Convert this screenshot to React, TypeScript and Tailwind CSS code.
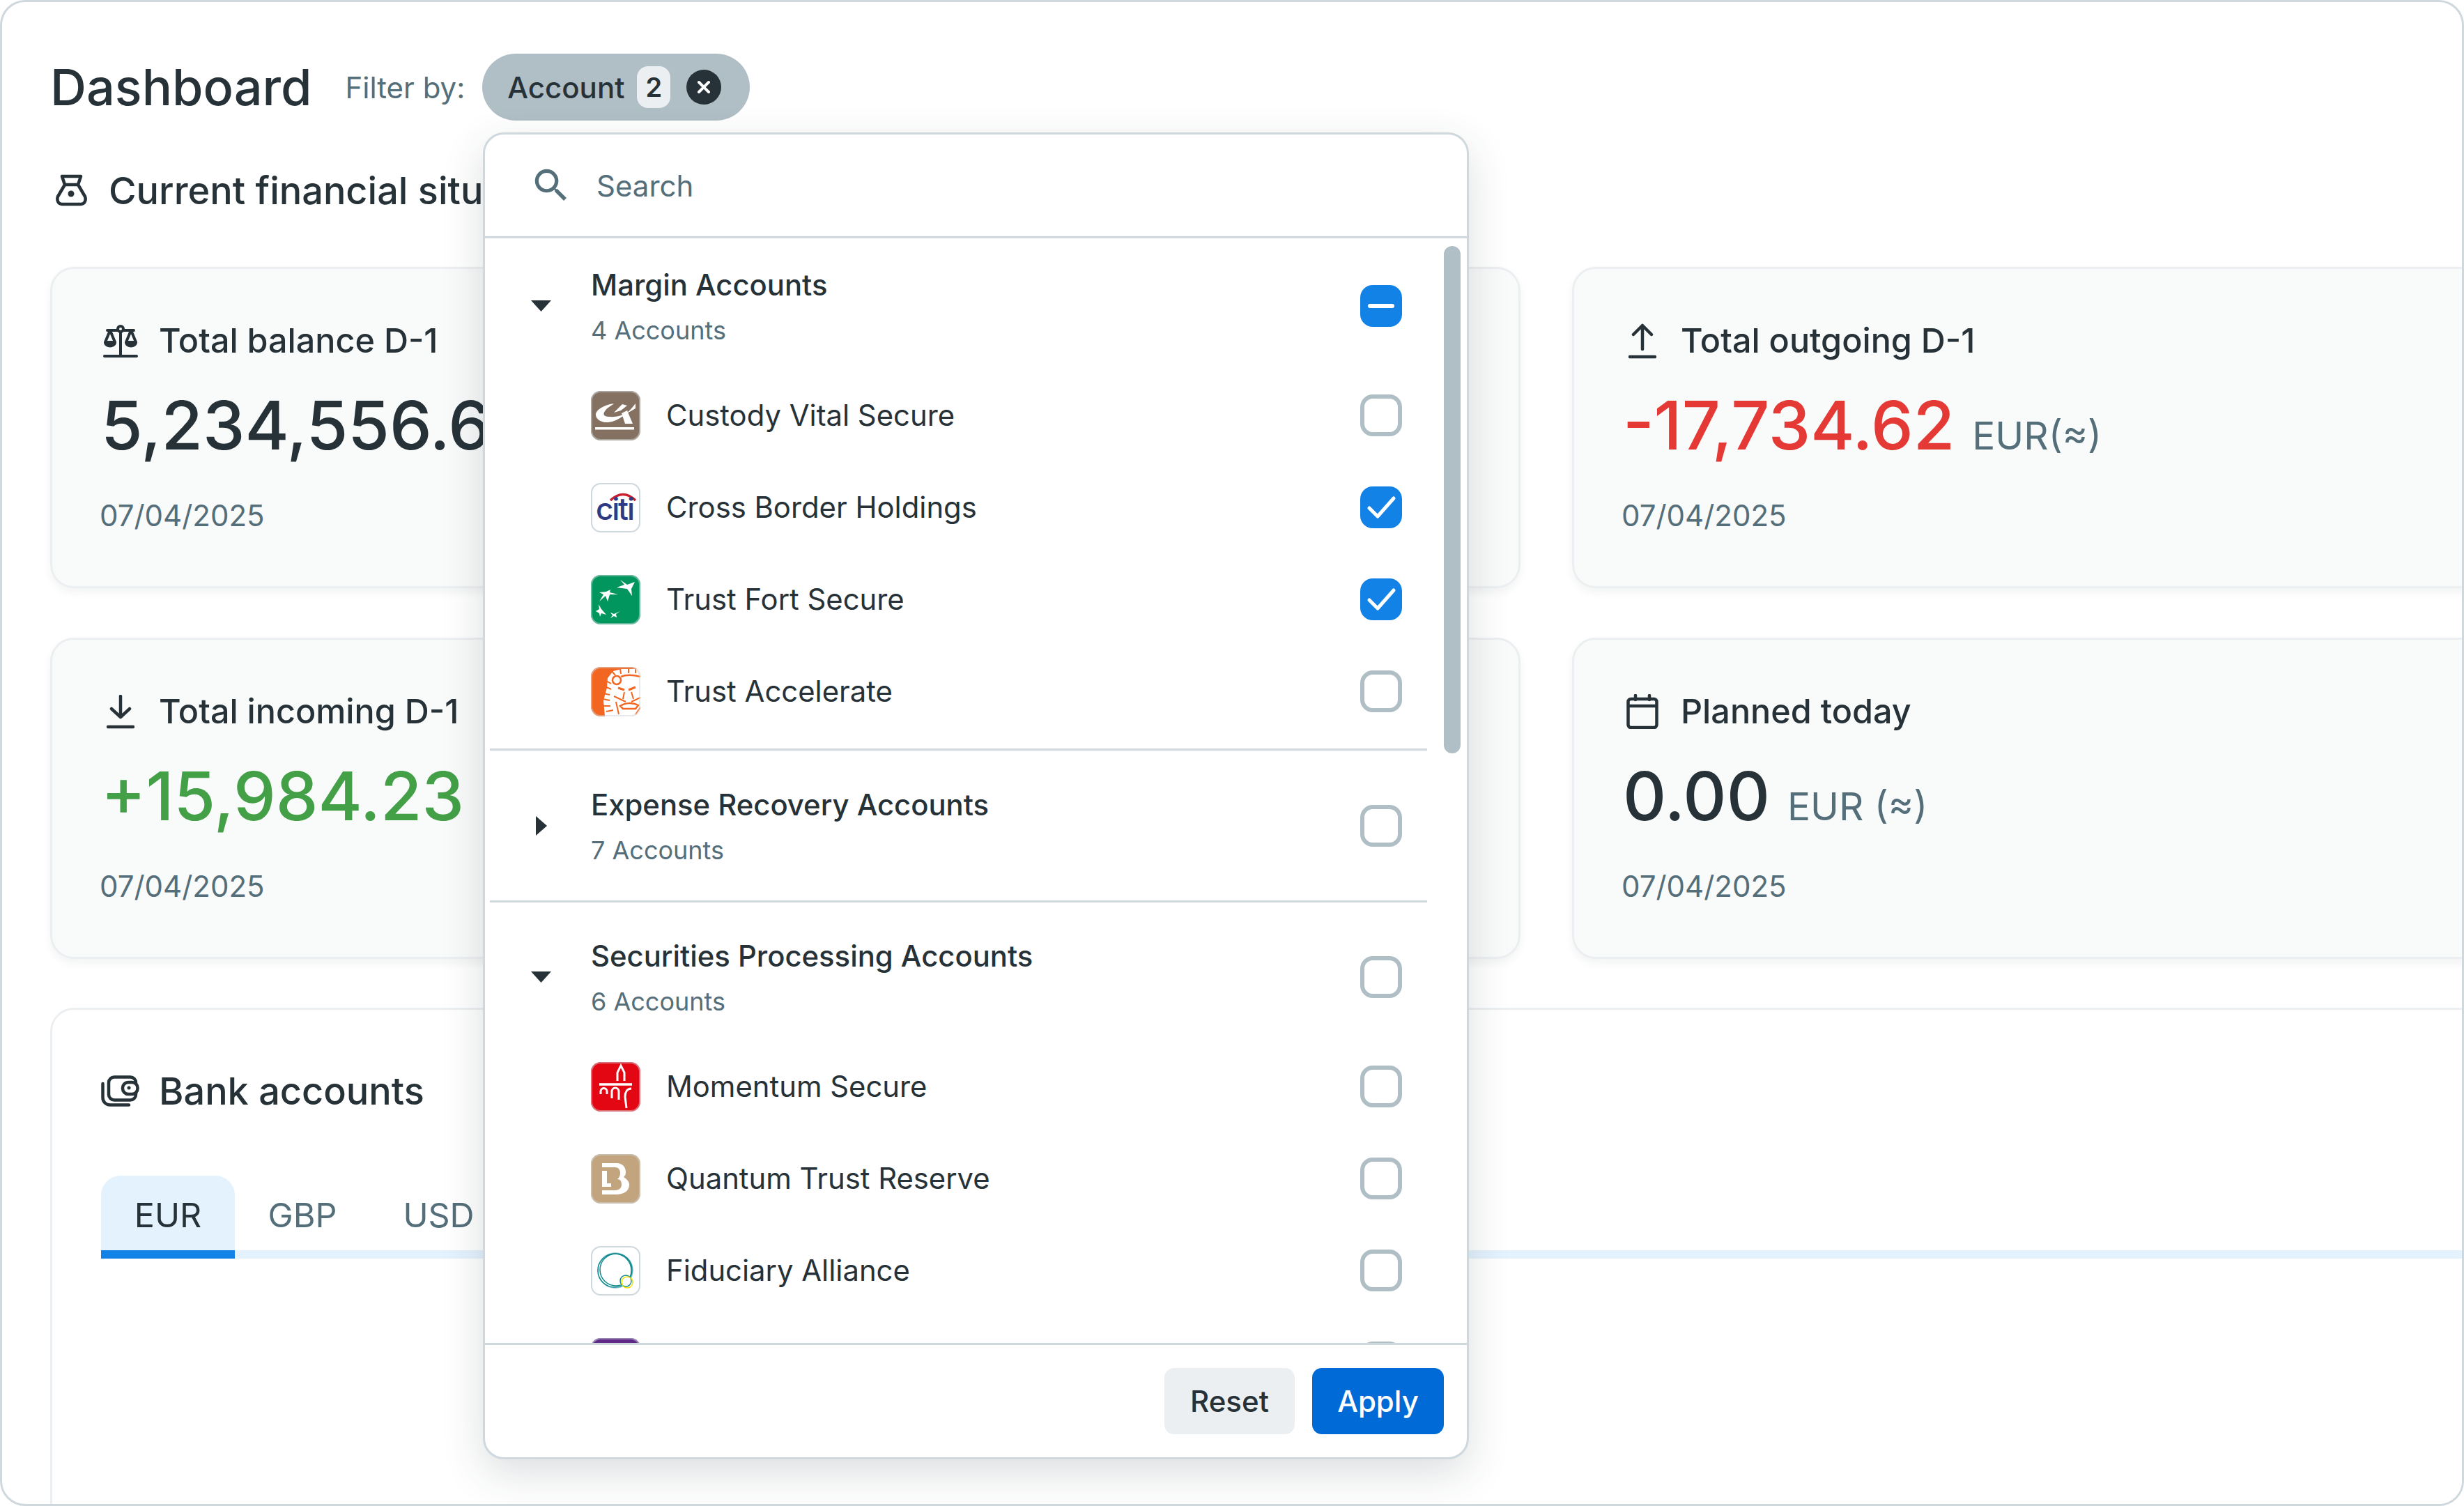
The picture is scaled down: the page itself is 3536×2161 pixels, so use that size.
import type { ReactNode } from "react";

const accounts = {
  margin: [
    { name: "Custody Vital Secure", logo: "ca", state: "off" },
    { name: "Cross Border Holdings", logo: "citi", state: "on" },
    { name: "Trust Fort Secure", logo: "bnp", state: "on" },
    { name: "Trust Accelerate", logo: "ing", state: "off" },
  ],
  securities: [
    { name: "Momentum Secure", logo: "momentum", state: "off" },
    { name: "Quantum Trust Reserve", logo: "quantum", state: "off" },
    { name: "Fiduciary Alliance", logo: "fiduciary", state: "off" },
    { name: "", logo: "purple", state: "off" },
  ],
};

function Logo({ kind }: { kind: string }) {
  if (kind === "ca") {
    return (
      <svg viewBox="0 0 71 71" className="w-full h-full bg-[#857161]">
        <path fill="#fff" d="M33 18C18 20 6 28 7 35C8 41 14 44 20 45C36 46 52 34 64 18V25C50 34 38 38 26 37C18 37 17 33 20 29C23 24 30 21 33 18Z" />
        <path fill="#fff" d="M33 31L45 19L52 21L43 28Z" />
        <path fill="#fff" d="M44 32L52 28L60 47H49Z" />
        <rect x="6" y="52" width="56" height="3.5" fill="#fff" />
      </svg>
    );
  }
  if (kind === "citi") {
    return (
      <svg viewBox="0 0 71 71" className="w-full h-full bg-white">
        <path d="M28 25Q46 8 64 25" fill="none" stroke="#c8202f" strokeWidth="3.5" />
        <text x="7" y="53" fontSize="44" fontWeight="500" fill="#2f3a85" textLength="56" fontFamily="Inter, sans-serif">citi</text>
      </svg>
    );
  }
  if (kind === "bnp") {
    return (
      <svg viewBox="0 0 71 71" className="w-full h-full bg-[#00965e]">
        <g fill="#fff">
          <polygon points="42,7 52,14 63,10 58,20 59,30 52,20 37,18 48,14" />
          <polygon points="12,25 22,24 28,21 27,25 39,28 27,28 24,38 21,30 12,38 18,28" />
          <polygon points="11,42 15,49 22,57 15,55 13,60 12,55 7,52 12,49" />
          <polygon points="42,52 36,56 37,61 33,59 28,62 31,58 28,54 33,56" />
        </g>
      </svg>
    );
  }
  if (kind === "ing") {
    return (
      <svg viewBox="0 0 71 71" className="w-full h-full bg-[#f36621]">
        <path fill="#fff" d="M20 71L18 48L23 30L24 16L32 6L44 3H71V71Z" />
        <g stroke="#f36621" fill="none" strokeWidth="2">
          <path d="M17 46L27 48M18 38L27 40M20 28L29 32M22 20L29 24M18 56L28 56M22 64L32 62M30 6L35 12M42 2L43 10M54 2L54 9M64 2L64 9" />
          <circle cx="37" cy="19" r="6" strokeWidth="2.5" />
          <path d="M43 14C50 11 60 11 71 14" strokeWidth="2.5" />
          <path d="M39 30L48 33M54 33L64 29" strokeWidth="3" />
          <path d="M48 36L46 46M58 36L61 46" strokeWidth="2" />
          <path d="M33 42L50 50M71 44L58 50" strokeWidth="2" />
          <path d="M42 56C50 51 60 51 68 55L64 60H46Z" strokeWidth="2.5" />
          <path d="M36 50L40 68M71 58L64 68" strokeWidth="2" />
        </g>
      </svg>
    );
  }
  if (kind === "momentum") {
    return (
      <svg viewBox="0 0 71 71" className="w-full h-full bg-[#e30613]">
        <g fill="none" stroke="#fff" strokeWidth="3">
          <path d="M38 27V15L43 5L48 15V27" />
          <path d="M12 32H59" strokeWidth="3.5" />
          <path d="M14 46V42A4 4 0 0 1 23 42V46M30 52V42A4 4 0 0 1 40 42V54" />
          <path d="M58 38C52 38 49 43 49 50L51 66" />
        </g>
      </svg>
    );
  }
  if (kind === "quantum") {
    return (
      <svg viewBox="0 0 71 71" className="w-full h-full bg-[#c2a47e]">
        <path fill="#fff" d="M16 13H36C46 13 50 19 50 26C50 29 49 31 47 33C52 36 55 40 55 44C55 53 47 58 36 58H16V52H34C40 52 44 49 44 44C44 39 42 36 38 36C41 33 42 31 42 27C42 22 39 19 35 19H16Z" />
        <path fill="#fff" d="M16 24H23V42H29V47H16Z" />
      </svg>
    );
  }
  if (kind === "fiduciary") {
    return (
      <svg viewBox="0 0 71 71" className="w-full h-full bg-white">
        <g fill="none" strokeWidth="1.5">
          <circle cx="35" cy="35" r="25" stroke="#8fc4cf" />
          <circle cx="34" cy="35" r="24" stroke="#0f8a8f" />
          <circle cx="36" cy="34" r="23" stroke="#0f8a8f" />
          <circle cx="50" cy="50" r="8" stroke="#0f8a8f" fill="#fff" />
          <circle cx="52" cy="52" r="8" stroke="#f5e000" />
        </g>
      </svg>
    );
  }
  return <div className="w-full h-full bg-[#5f2a85]" />;
}

function Checkbox({ state }: { state: string }) {
  if (state === "off") {
    return <div className="w-[60px] h-[60px] shrink-0 rounded-[18px] border-[6px] border-[#b0bec5] bg-white" />;
  }
  return (
    <div className="w-[60px] h-[60px] shrink-0 rounded-[18px] bg-[#1282e6]">
      <svg viewBox="0 0 60 60" className="w-full h-full">
        {state === "on" ? (
          <path d="M13 31L25 43L48 17" fill="none" stroke="#fff" strokeWidth="5" strokeLinecap="round" strokeLinejoin="round" />
        ) : (
          <path d="M14 30H46" fill="none" stroke="#fff" strokeWidth="6" strokeLinecap="round" />
        )}
      </svg>
    </div>
  );
}

function AccountRow({ name, logo, state }: { name: string; logo: string; state: string }) {
  const edge = logo === "citi" || logo === "fiduciary" ? "outline-[#cfd8dc]" : "outline-[#cfd8dc]/50";
  return (
    <div className="h-[132px] flex items-center pl-[152px] pr-[93px]">
      <div className={`w-[71px] h-[71px] shrink-0 rounded-[14px] overflow-hidden outline-2 -outline-offset-2 ${edge}`}>
        <Logo kind={logo} />
      </div>
      <span className="ml-[37px] flex-1 text-[41.8px] text-[#263238]">{name}</span>
      <Checkbox state={state} />
    </div>
  );
}

function GroupHeader({ title, sub, open, className }: { title: string; sub: string; open: boolean; className: string }) {
  return (
    <div className={`flex items-center pr-[93px] ${className}`}>
      <div className="w-[152px] pl-[65px] shrink-0">
        {open ? (
          <svg width="31" height="18" viewBox="0 0 31 18">
            <path d="M1 1H30L15.5 17Z" fill="#263238" />
          </svg>
        ) : (
          <svg width="18" height="30" viewBox="0 0 18 30" className="ml-[7px]">
            <path d="M1 1L17 15L1 29Z" fill="#263238" />
          </svg>
        )}
      </div>
      <div className="flex-1 pt-[6px]">
        <div className="text-[41.8px] leading-[65px] font-medium text-[#263238]">{title}</div>
        <div className="text-[36px] leading-[65px] text-[#546e7a]">{sub}</div>
      </div>
      <Checkbox state={open && title === "Margin Accounts" ? "mixed" : "off"} />
    </div>
  );
}

function Dropdown() {
  return (
    <div className="absolute left-[690px] top-[187px] w-[1415px] h-[1904px] flex flex-col rounded-[30px] border-[3px] border-[#cfd8dc] bg-white overflow-hidden shadow-[0_20px_60px_rgba(38,50,56,0.16)]">
      <div className="h-[149px] shrink-0 flex items-center pl-[64px] border-b-[3px] border-[#cfd8dc]">
        <svg viewBox="0 0 24 24" className="w-[62px] h-[62px]" fill="#546e7a">
          <path d="M9.5,3A6.5,6.5 0 0,1 16,9.5C16,11.11 15.41,12.59 14.44,13.73L14.71,14H15.5L20.5,19L19,20.5L14,15.5V14.71L13.73,14.44C12.59,15.41 11.11,16 9.5,16A6.5,6.5 0 0,1 3,9.5A6.5,6.5 0 0,1 9.5,3M9.5,5C7,5 5,7 5,9.5C5,12 7,14 9.5,14C12,14 14,12 14,9.5C14,7 12,5 9.5,5Z" />
        </svg>
        <span className="ml-[34px] text-[42px] text-[#546e7a]">Search</span>
      </div>
      <div className="relative flex-1 min-h-0 overflow-hidden pt-px">
        <div className="absolute left-[1376px] top-[11px] w-[24px] h-[728px] rounded-full bg-[#b0bec5]" />
        <GroupHeader title="Margin Accounts" sub="4 Accounts" open className="h-[187px] pt-[5px]" />
        {accounts.margin.map((a) => (
          <AccountRow key={a.name} {...a} />
        ))}
        <div className="mt-[16px] ml-[7px] w-[1345px] h-[3px] bg-[#cfd8dc]" />
        <GroupHeader title="Expense Recovery Accounts" sub="7 Accounts" open={false} className="h-[215px]" />
        <div className="ml-[7px] w-[1345px] h-[3px] bg-[#cfd8dc]" />
        <GroupHeader title="Securities Processing Accounts" sub="6 Accounts" open className="h-[198px] pt-[16px]" />
        {accounts.securities.map((a) => (
          <AccountRow key={a.logo} {...a} />
        ))}
      </div>
      <div className="h-[164px] shrink-0 flex items-center justify-end gap-[25px] pr-[33px] border-t-[3px] border-[#cfd8dc]">
        <button className="w-[187px] h-[95px] rounded-[14px] bg-[#eceff1] text-[42px] font-medium text-[#263238]">Reset</button>
        <button className="w-[189px] h-[95px] rounded-[14px] bg-[#006bd6] text-[42px] font-medium text-white">Apply</button>
      </div>
    </div>
  );
}

const stroke = { fill: "none", stroke: "#263238", strokeWidth: 4.5, strokeLinecap: "round", strokeLinejoin: "round" } as const;

const BagIcon = () => (
  <svg width="45" height="46" viewBox="0 0 45 46" {...stroke}>
    <path d="M9 3H36L32 15L42 32C44 38 41 43 36 43H9C4 43 1 38 3 32L13 15Z" />
    <path d="M13 15H32" />
    <circle cx="22" cy="28" r="4.5" fill="#263238" stroke="none" />
  </svg>
);
const ScaleIcon = () => (
  <svg width="50" height="48" viewBox="0 0 50 48" {...stroke} strokeWidth={4}>
    <path d="M2 46H48M25 12V46M6 9H20M30 9H44" />
    <circle cx="25" cy="7" r="4" />
    <path d="M10 9L3 26H17Z" />
    <path d="M40 9L33 26H47Z" />
    <path d="M3 27C4 33 16 33 17 27ZM33 27C34 33 46 33 47 27Z" fill="#263238" />
  </svg>
);
const DownIcon = () => (
  <svg width="40" height="49" viewBox="0 0 40 49" {...stroke}>
    <path d="M20 2V32M7 20L20 32L33 20M2 46H38" />
  </svg>
);
const UpIcon = () => (
  <svg width="40" height="51" viewBox="0 0 40 51" {...stroke}>
    <path d="M20 37V3M7 16L20 3L33 16M2 48H38" />
  </svg>
);
const CalendarIcon = () => (
  <svg width="46" height="50" viewBox="0 0 46 50" {...stroke}>
    <rect x="2.5" y="7" width="41" height="41" rx="4" />
    <path d="M3 17H43M13 2V8M33 2V8" />
  </svg>
);
const WalletIcon = () => (
  <svg width="55" height="45" viewBox="0 0 55 45" {...stroke}>
    <path d="M2.5 12V32C2.5 38 7 42.5 13 42.5H40" />
    <rect x="11" y="2.5" width="39" height="33" rx="8" />
    <rect x="31" y="10" width="21.5" height="17" rx="8" fill="#fff" />
    <circle cx="40" cy="18" r="2.5" fill="#263238" stroke="none" />
  </svg>
);

const cardBox = "h-[461px] rounded-[34px] border-[3px] border-[#eceff1] bg-[#f9fafa] shadow-[0_6px_12px_rgba(38,50,56,0.06)] overflow-hidden";

function StatCard({ icon, label, value, unit, color }: { icon: ReactNode; label: string; value: string; unit: string; color: string }) {
  return (
    <div className={`${cardBox} pt-[73px] pl-[68px]`}>
      <div className="flex items-center h-[60px]">
        <div className="w-[60px] flex justify-center shrink-0">{icon}</div>
        <span className="ml-[25px] text-[48.5px] leading-[60px] font-medium text-[#263238] whitespace-nowrap">{label}</span>
      </div>
      <div className="flex items-baseline ml-[2px] mt-[31px] h-[120px] whitespace-nowrap">
        <span className={`text-[96.5px] leading-[120px] font-medium ${color}`}>{value}</span>
        <span className="ml-[25px] text-[55px] text-[#546e7a]">{unit}</span>
      </div>
      <div className="mt-[40px] text-[42px] leading-[60px] text-[#546e7a]">07/04/2025</div>
    </div>
  );
}

export default function App() {
  return (
    <div className="relative w-[3536px] h-[2161px] overflow-hidden rounded-[36px] border-[3px] border-[#cfd8dc] bg-white font-['Inter',sans-serif] pl-[69px] pt-[74px]">
      <div className="flex items-center h-[96px]">
        <h1 className="text-[72px] font-medium text-[#263238]">Dashboard</h1>
        <span className="ml-[48px] text-[42px] text-[#546e7a]">Filter by:</span>
        <div className="ml-[25px] h-[96px] w-[384px] shrink-0 rounded-full bg-[#b0bec5] flex items-center pl-[36px]">
          <span className="text-[42px] font-medium text-[#263238]">Account</span>
          <span className="ml-[18px] w-[48px] h-[60px] shrink-0 rounded-[16px] bg-[#eceff1] flex items-center justify-center text-[38px] font-semibold text-[#263238]">2</span>
          <span className="ml-[23px] w-[50px] h-[50px] shrink-0 rounded-full bg-[#263238] flex items-center justify-center">
            <svg width="20" height="20" viewBox="0 0 20 20">
              <path d="M3 3L17 17M17 3L3 17" stroke="#fff" strokeWidth="4" strokeLinecap="round" />
            </svg>
          </span>
        </div>
      </div>

      <div className="flex items-center mt-[70px] h-[60px]">
        <div className="ml-[8px] w-[45px]">
          <BagIcon />
        </div>
        <h2 className="ml-[31px] text-[54px] font-medium text-[#263238] whitespace-nowrap">Current financial situation</h2>
      </div>

      <div className="grid grid-cols-[1018px_1018px_1400px] gap-x-[74px] gap-y-[71px] mt-[80px]">
        <StatCard icon={<ScaleIcon />} label="Total balance D-1" value="5,234,556.67" unit="EUR(≈)" color="text-[#263238]" />
        <div className={cardBox} />
        <StatCard icon={<UpIcon />} label="Total outgoing D-1" value="-17,734.62" unit="EUR(≈)" color="text-[#e53935]" />
        <StatCard icon={<DownIcon />} label="Total incoming D-1" value="+15,984.23" unit="EUR(≈)" color="text-[#43a047]" />
        <div className={cardBox} />
        <StatCard icon={<CalendarIcon />} label="Planned today" value="0.00" unit="EUR (≈)" color="text-[#263238]" />
      </div>

      <div className="mt-[70px] w-[3600px] h-[900px] rounded-[34px] border-[3px] border-[#eceff1] bg-white pl-[70px] pt-[86px]">
        <div className="flex items-center h-[60px]">
          <WalletIcon />
          <span className="ml-[28px] text-[54px] font-medium text-[#263238]">Bank accounts</span>
        </div>
        <div className="mt-[92px] flex border-b-[12px] border-[#e3f2fd] h-[119px]">
          <div className="relative w-[192px] h-[107px] pt-[8px] rounded-t-[28px] bg-[#e3f2fd] flex items-center justify-center text-[48.5px] text-[#263238]">
            EUR
            <div className="absolute left-0 right-0 bottom-[-12px] h-[12px] bg-[#1282e6]" />
          </div>
          <div className="w-[194px] h-[107px] pt-[8px] flex items-center justify-center text-[48.5px] text-[#546e7a]">GBP</div>
          <div className="w-[197px] h-[107px] pt-[8px] flex items-center justify-center text-[48.5px] text-[#546e7a]">USD</div>
        </div>
      </div>

      <Dropdown />
    </div>
  );
}
